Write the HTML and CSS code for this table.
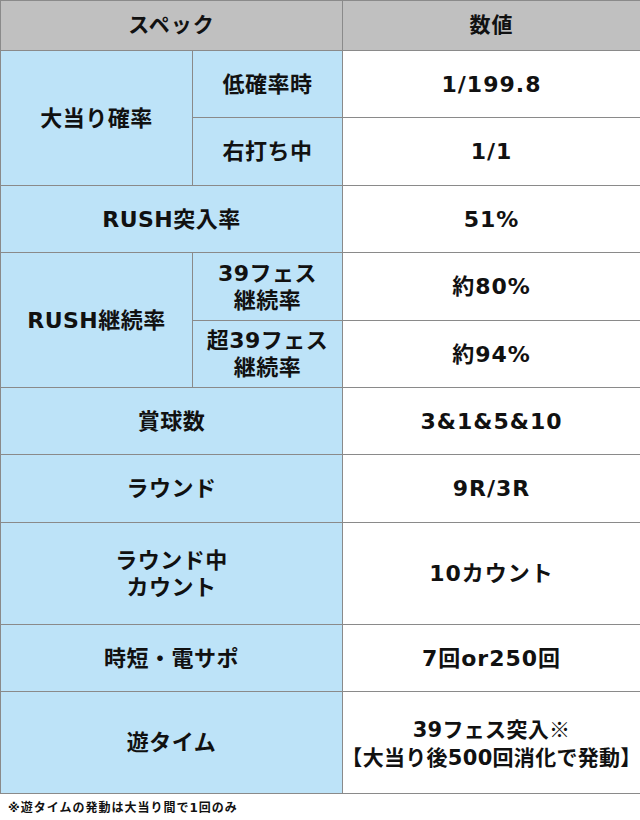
FILE: index.html
```html
<!DOCTYPE html>
<html lang="ja">
<head>
<meta charset="utf-8">
<title>スペック</title>
<link rel="stylesheet" href="styles.css">
</head>
<body>
<div class="spec">
  <div class="cell head span2"><span>スペック</span></div>
  <div class="cell head"><span>数値</span></div>

  <div class="cell label rspan2"><span>大当り確率</span></div>
  <div class="cell label"><span>低確率時</span></div>
  <div class="cell value"><span>1/199.8</span></div>
  <div class="cell label"><span>右打ち中</span></div>
  <div class="cell value"><span>1/1</span></div>

  <div class="cell label span2"><span>RUSH突入率</span></div>
  <div class="cell value"><span>51%</span></div>

  <div class="cell label rspan2"><span>RUSH継続率</span></div>
  <div class="cell label two"><span>39フェス<br>継続率</span></div>
  <div class="cell value"><span>約80%</span></div>
  <div class="cell label two"><span>超39フェス<br>継続率</span></div>
  <div class="cell value"><span>約94%</span></div>

  <div class="cell label span2"><span>賞球数</span></div>
  <div class="cell value"><span>3&amp;1&amp;5&amp;10</span></div>

  <div class="cell label span2"><span>ラウンド</span></div>
  <div class="cell value"><span>9R/3R</span></div>

  <div class="cell label span2 two"><span>ラウンド中<br>カウント</span></div>
  <div class="cell value"><span>10カウント</span></div>

  <div class="cell label span2"><span>時短・電サポ</span></div>
  <div class="cell value"><span>7回or250回</span></div>

  <div class="cell label span2"><span>遊タイム</span></div>
  <div class="cell value small"><span>39フェス突入<span class="mark">※</span><br><span class="br">【</span>大当り後500回消化で発動<span class="br">】</span></span></div>
</div>
<p class="note">※遊タイムの発動は大当り間で1回のみ</p>
</body>
</html>
```
FILE: styles.css
```css
html, body {
  margin: 0;
  padding: 0;
  background: #fff;
}
body {
  width: 640px;
  font-family: "DejaVu Sans", "Noto Sans CJK JP", sans-serif;
  font-weight: 700;
  color: #111;
}
.spec {
  display: grid;
  grid-template-columns: 191px 149px 297px;
  grid-template-rows: 49px 66px 67px 66px 67px 66px 66px 67px 101px 66px 101px;
  gap: 1px;
  padding: 1px;
  background: #8a8a8a;
  width: 640px;
  box-sizing: border-box;
}
.cell {
  display: flex;
  align-items: center;
  justify-content: center;
  text-align: center;
  background: #fff;
  font-size: 22px;
  letter-spacing: 0.5px;
  line-height: 27px;
}
.head {
  background: #c0c0c0;
  font-size: 21px;
  letter-spacing: 1px;
}
.label {
  background: #bde3f8;
}
.span2 {
  grid-column: span 2;
}
.rspan2 {
  grid-row: span 2;
}
.value {
  letter-spacing: 1px;
}
.small {
  font-size: 21px;
  letter-spacing: 0.3px;
  line-height: 28px;
}
.mark {
  font-family: "Noto Sans CJK JP", sans-serif;
  font-weight: 400;
}
.br {
  font-feature-settings: "halt";
}
.note {
  margin: 0;
  padding: 6px 0 0 8px;
  font-size: 12px;
  line-height: 16px;
  letter-spacing: 1px;
}
```
